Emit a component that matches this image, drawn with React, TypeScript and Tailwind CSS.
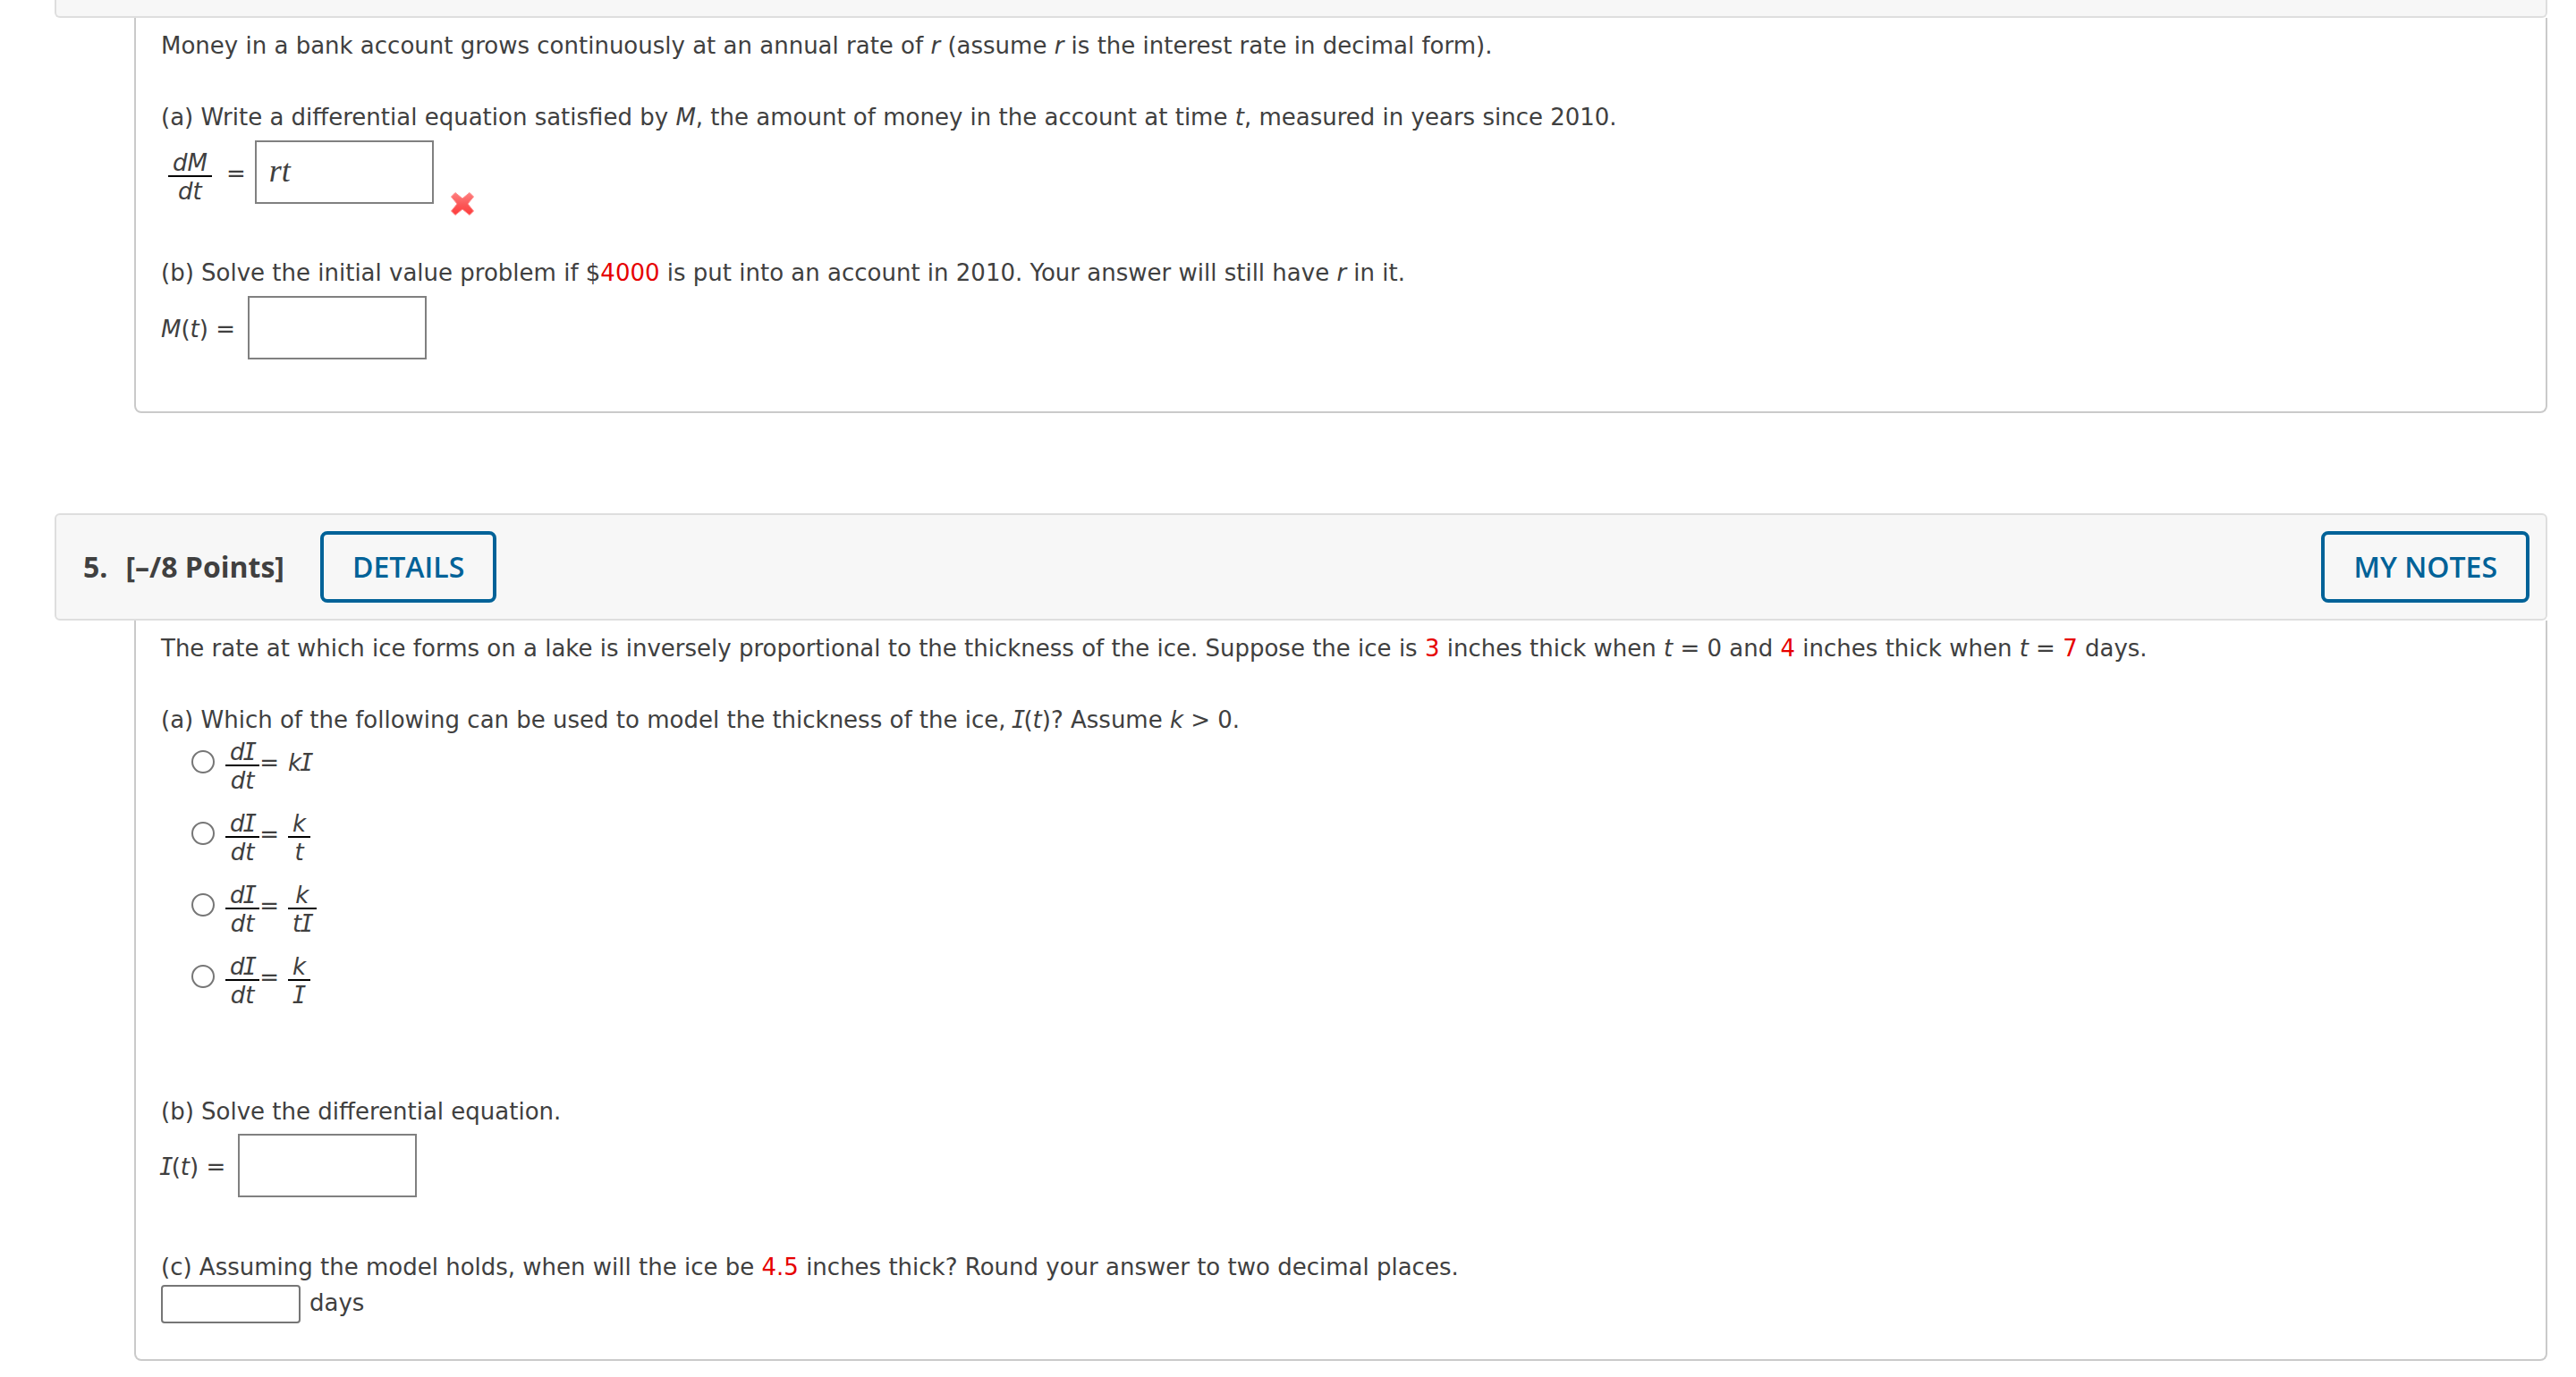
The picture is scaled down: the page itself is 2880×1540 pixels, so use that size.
import { ReactNode, useState } from 'react';

type FractionProps = {
  top: ReactNode;
  bottom: ReactNode;
};

type MathInputProps = {
  id: string;
  initialValue?: string;
};

type QuestionHeaderProps = {
  number: number;
  points: string;
};

// The text face has no serifs on its capital I, so the variable borrows the mono one.
const I = () => (
  <span className="-mx-0.5 font-['DejaVu_Sans_Mono',monospace] italic leading-none">
    I
  </span>
);

const Value = ({ children }: { children: ReactNode }) => (
  <span className="text-[#e60000]">{children}</span>
);

function Fraction({ top, bottom }: FractionProps) {
  return (
    <span className="inline-flex flex-col text-center italic leading-7">
      <span className="border-b-2 border-black px-[5px]">{top}</span>
      <span className="px-[5px] pt-0.5">{bottom}</span>
    </span>
  );
}

function MathInput({ id, initialValue = '' }: MathInputProps) {
  const [value, setValue] = useState(initialValue);
  return (
    <input
      id={id}
      type="text"
      value={value}
      onChange={(e) => setValue(e.target.value)}
      className="h-[71px] w-[200px] border-2 border-[#808080] bg-white px-3.5 pb-1 font-['Liberation_Serif',serif] text-[36px] italic outline-none"
    />
  );
}

function WrongMark() {
  return (
    <svg
      viewBox="0 0 28 28"
      role="img"
      aria-label="Incorrect"
      className="-mb-3.5 ml-[18px] size-7"
    >
      <defs>
        <linearGradient id="wrong" x1="0" y1="0" x2="0" y2="1">
          <stop offset="0" stopColor="#ff8080" />
          <stop offset="0.5" stopColor="#fb5a5a" />
          <stop offset="1" stopColor="#ff3b3b" />
        </linearGradient>
      </defs>
      <path
        d="M6 1.500 L14 8 L22 1.500 L26.500 6 L20 14 L26.500 22 L22 26.500 L14 20 L6 26.500 L1.500 22 L8 14 L1.500 6 Z"
        fill="url(#wrong)"
        stroke="#ff8a8a"
        strokeWidth="1"
        strokeLinejoin="round"
      />
    </svg>
  );
}

function QuestionHeader({ number, points }: QuestionHeaderProps) {
  const buttonClass =
    'h-20 rounded-lg border-4 border-[#006298] px-8 font-semibold text-[#006298]';
  return (
    <header className="flex h-[120px] items-center rounded-md border-2 border-[#dedede] bg-[#f7f7f7] pl-[30px] pr-[18px] font-['Open_Sans',sans-serif] text-[32px]">
      <h2 className="mr-10 flex gap-5 font-bold">
        <span>{number}.</span>
        <span>[{points}]</span>
      </h2>
      <button type="button" className={buttonClass}>
        DETAILS
      </button>
      <button type="button" className={`${buttonClass} ml-auto`}>
        MY NOTES
      </button>
    </header>
  );
}

const QuestionBody = ({ children }: { children: ReactNode }) => (
  <div className="ml-[89px] rounded-b-lg border-2 border-t-0 border-[#cacaca] pl-7 pr-4 pt-[11px]">
    {children}
  </div>
);

const rates = [
  { id: 'kI', rhs: <i className="pb-2">k<I /></i> },
  { id: 'k/t', rhs: <Fraction top="k" bottom="t" /> },
  { id: 'k/tI', rhs: <Fraction top="k" bottom={<>t<I /></>} /> },
  { id: 'k/I', rhs: <Fraction top="k" bottom={<I />} /> },
];

function App() {
  const [rate, setRate] = useState('');
  const [days, setDays] = useState('');

  return (
    <main className="ml-[61px] mr-8 font-['DejaVu_Sans',sans-serif] text-[26px] leading-10 text-[#404040]">
      <section>
        <div className="h-5 rounded-b-md border-2 border-t-0 border-[#dedede] bg-[#f7f7f7]" />
        <QuestionBody>
          <p>
            Money in a bank account grows continuously at an annual rate of{' '}
            <i>r</i> (assume <i>r</i> is the interest rate in decimal form).
          </p>
          <p className="mt-10">
            (a) Write a differential equation satisfied by <i>M</i>, the amount
            of money in the account at time <i>t</i>, measured in years since
            2010.
          </p>
          <div className="mb-[57px] mt-1.5 flex items-end">
            <label htmlFor="rate-eq" className="ml-2 flex items-end">
              <Fraction top="dM" bottom="dt" />
              <span className="mb-3.5 ml-4 mr-2.5">=</span>
            </label>
            <MathInput id="rate-eq" initialValue="rt" />
            <WrongMark />
          </div>
          <p>
            (b) Solve the initial value problem if $<Value>4000</Value> is put
            into an account in 2010. Your answer will still have <i>r</i> in it.
          </p>
          <div className="mb-[58px] mt-1.5 flex items-end">
            <label htmlFor="balance" className="mb-3.5 mr-3.5">
              <i>M</i>(<i>t</i>) =
            </label>
            <MathInput id="balance" />
          </div>
        </QuestionBody>
      </section>

      <section className="mt-28">
        <QuestionHeader number={5} points="–/8 Points" />
        <QuestionBody>
          <p>
            The rate at which ice forms on a lake is inversely proportional to
            the thickness of the ice. Suppose the ice is <Value>3</Value> inches
            thick when <i>t</i> = 0 and <Value>4</Value> inches thick when{' '}
            <i>t</i> = <Value>7</Value> days.
          </p>
          <fieldset className="mb-[78px]">
            <legend className="pt-10">
              (a) Which of the following can be used to model the thickness of
              the ice, <I />(<i>t</i>)? Assume <i>k</i> &gt; 0.
            </legend>
            {rates.map(({ id, rhs }) => (
              <label key={id} className="ml-[34px] flex h-20 items-start">
                <input
                  type="radio"
                  name="rate"
                  value={id}
                  checked={rate === id}
                  onChange={() => setRate(id)}
                  className="mr-3 mt-3.5 size-[26px] appearance-none rounded-full border-2 border-[#767676] bg-white checked:border-8 checked:border-[#006298]"
                />
                <span className="flex h-16 items-center">
                  <Fraction top={<>d<I /></>} bottom="dt" />
                  <span className="mr-2.5 pb-2">=</span>
                  {rhs}
                </span>
              </label>
            ))}
          </fieldset>
          <p>(b) Solve the differential equation.</p>
          <div className="mb-[58px] mt-[5px] flex items-end">
            <label htmlFor="thickness" className="mb-3.5 mr-3.5">
              <I />(<i>t</i>) =
            </label>
            <MathInput id="thickness" />
          </div>
          <p>
            (c) Assuming the model holds, when will the ice be{' '}
            <Value>4.5</Value> inches thick? Round your answer to two decimal
            places.
          </p>
          <div className="mb-10 flex items-start">
            <input
              id="days"
              type="text"
              value={days}
              onChange={(e) => setDays(e.target.value)}
              className="mr-2.5 h-[43px] w-[156px] rounded border-2 border-[#767676] bg-white px-1 outline-none"
            />
            <label htmlFor="days">days</label>
          </div>
        </QuestionBody>
      </section>
    </main>
  );
}

export default App;
